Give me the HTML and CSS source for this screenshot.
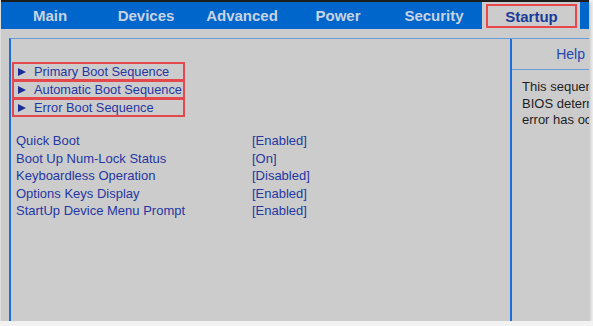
FILE: index.html
```html
<!DOCTYPE html>
<html>
  <head>
    <title>BIOS Setup - Startup</title>
    <link rel="stylesheet" href="styles.css">
  </head>
  <body>
    <div class="screen">
      <div class="topline"></div>
      <div class="menu">
        <div class="tab">Main</div>
        <div class="tab">Devices</div>
        <div class="tab">Advanced</div>
        <div class="tab">Power</div>
        <div class="tab">Security</div>
        <div class="tab active"><span class="tab-box">Startup</span></div>
      </div>
      <div class="frame">
        <div class="main">
          <div class="groups">
            <div class="sub"><span class="arrow"></span>Primary Boot Sequence</div>
            <div class="sub"><span class="arrow"></span>Automatic Boot Sequence</div>
            <div class="sub"><span class="arrow"></span>Error Boot Sequence</div>
          </div>
          <div class="settings">
            <div class="row"><span class="label">Quick Boot</span><span class="value">[Enabled]</span></div>
            <div class="row"><span class="label">Boot Up Num-Lock Status</span><span class="value">[On]</span></div>
            <div class="row"><span class="label">Keyboardless Operation</span><span class="value">[Disabled]</span></div>
            <div class="row"><span class="label">Options Keys Display</span><span class="value">[Enabled]</span></div>
            <div class="row"><span class="label">StartUp Device Menu Prompt</span><span class="value">[Enabled]</span></div>
          </div>
        </div>
        <div class="help">
          <div class="help-title">Help</div>
          <div class="help-body">
            This sequence is used when<br>
            BIOS determines that an<br>
            error has occurred.
          </div>
        </div>
      </div>
    </div>
  </body>
</html>
```

FILE: styles.css
```css
body {
  margin: 0;
  background-color: #f2f2f2;
  font-family: "Liberation Sans", Arial, sans-serif;
}
.screen {
  width: 589px;
  height: 321px;
  background-color: #cccccc;
  border-left: 1px solid #dedede;
  box-sizing: border-box;
  box-shadow: 1px 2px 4px rgba(0, 0, 0, 0.25);
  display: flex;
  flex-direction: column;
  overflow: hidden;
}
.topline {
  height: 2px;
  background-color: #1c1c1c;
}
.menu {
  height: 27px;
  background-color: #0066cc;
  display: flex;
  padding-left: 1px;
}
.tab {
  width: 96px;
  display: flex;
  align-items: center;
  justify-content: center;
  color: #c9d3e3;
  font-size: 15px;
  font-weight: bold;
}
.tab.active {
  width: 98px;
  background-color: #cccccc;
  padding: 2px 3px 1px 4px;
  box-sizing: border-box;
}
.tab-box {
  flex: 1;
  align-self: stretch;
  display: flex;
  align-items: center;
  justify-content: center;
  border: 2px solid #e8474c;
  color: #1b3b9b;
}
.frame {
  flex: 1;
  margin: 9px 0 0 8px;
  border-top: 1px solid #6a9ddb;
  border-left: 2px solid #1a70d8;
  display: flex;
}
.main {
  width: 498px;
  padding: 23px 0 0 1px;
}
.groups {
  width: 173px;
}
.sub {
  height: 19px;
  border: 2px solid #e4474c;
  box-sizing: border-box;
  display: flex;
  align-items: center;
  white-space: nowrap;
  color: #2537a3;
  font-size: 12.8px;
}
.sub + .sub {
  margin-top: -1px;
}
.arrow {
  width: 0;
  height: 0;
  margin: 0 8px 0 4px;
  border-left: 8px solid #1c2e96;
  border-top: 4.5px solid transparent;
  border-bottom: 4.5px solid transparent;
}
.settings {
  margin-top: 15px;
  padding-left: 4px;
}
.row {
  display: flex;
  height: 17.5px;
  align-items: center;
  color: #2537a3;
  font-size: 13px;
}
.label {
  width: 236px;
}
.help {
  flex: 1;
  border-left: 2px solid #1a70d8;
  overflow: hidden;
}
.help-title {
  height: 30px;
  border-bottom: 1px solid #6a9ddb;
  display: flex;
  align-items: center;
  justify-content: flex-end;
  padding-right: 4px;
  color: #2545b0;
  font-size: 14px;
}
.help-body {
  padding: 9px 0 0 10px;
  white-space: nowrap;
  color: #1e1e1e;
  font-size: 13px;
  line-height: 16.5px;
}
```
